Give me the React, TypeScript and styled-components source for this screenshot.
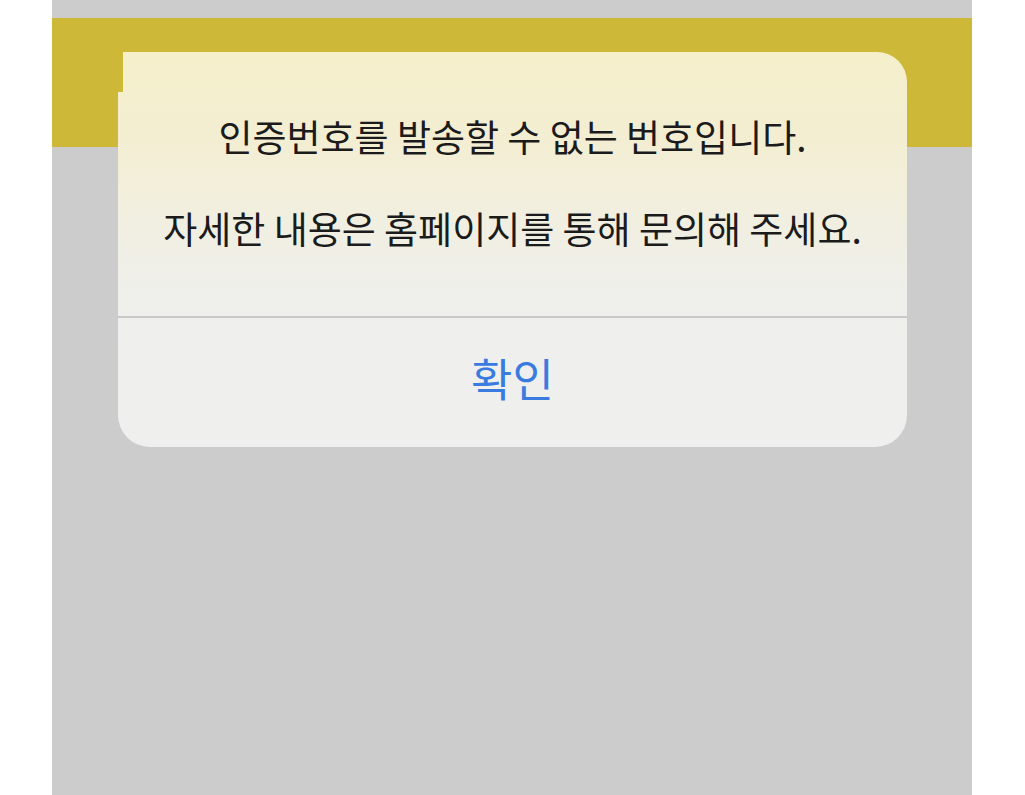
import { createGlobalStyle, styled } from "styled-components";

const GlobalStyle = createGlobalStyle`
  html, body {
    margin: 0;
    background: #ffffff;
  }
  body {
    font-family: "Noto Sans CJK KR", "Noto Sans", sans-serif;
  }
`;

const App = () => {
  return (
    <>
      <GlobalStyle />
      <StyledPage>
        <StyledScreen>
          <StyledBanner />
          <StyledDialog>
            <StyledMessage>
              <StyledLine>인증번호를 발송할 수 없는 번호입니다.</StyledLine>
              <StyledLine>자세한 내용은 홈페이지를 통해 문의해 주세요.</StyledLine>
            </StyledMessage>
            <StyledDivider />
            <StyledButton type="button">확인</StyledButton>
          </StyledDialog>
        </StyledScreen>
      </StyledPage>
    </>
  );
};

export default App;

const StyledPage = styled.div`
  display: flex;
  padding-left: 52px;
`;

const StyledScreen = styled.div`
  position: relative;
  box-sizing: border-box;
  width: 920px;
  height: 795px;
  padding-top: 18px;
  background: #cccccc;
`;

const StyledBanner = styled.div`
  height: 129px;
  background: #cdb838;
`;

const StyledDialog = styled.div`
  position: absolute;
  top: 52px;
  left: 66px;
  width: 789px;
  height: 395px;
  display: flex;
  flex-direction: column;
  border-radius: 0 30px 32px 32px;
  background: linear-gradient(
    180deg,
    #f5efcb 0%,
    #f3eed2 22%,
    #f1efe2 45%,
    #efefec 62%,
    #efefef 100%
  );
  overflow: hidden;

  &::before {
    content: "";
    position: absolute;
    top: 0;
    left: 0;
    width: 5px;
    height: 40px;
    background: #cdb838;
  }
`;

const StyledMessage = styled.div`
  height: 264px;
  display: flex;
  flex-direction: column;
  align-items: center;
  justify-content: center;
  gap: 44px;
  padding-bottom: 4px;
  box-sizing: border-box;
`;

const StyledLine = styled.p`
  margin: 0;
  font-size: 37px;
  line-height: 48px;
  color: #1b1b1b;
  white-space: nowrap;
`;

const StyledDivider = styled.div`
  height: 2px;
  background: #c8c8c8;
`;

const StyledButton = styled.button`
  flex: 1;
  display: flex;
  align-items: center;
  justify-content: center;
  padding: 0 0 10px;
  border: none;
  background: transparent;
  font-family: inherit;
  font-size: 45px;
  color: #3a7be0;
  cursor: pointer;
`;
